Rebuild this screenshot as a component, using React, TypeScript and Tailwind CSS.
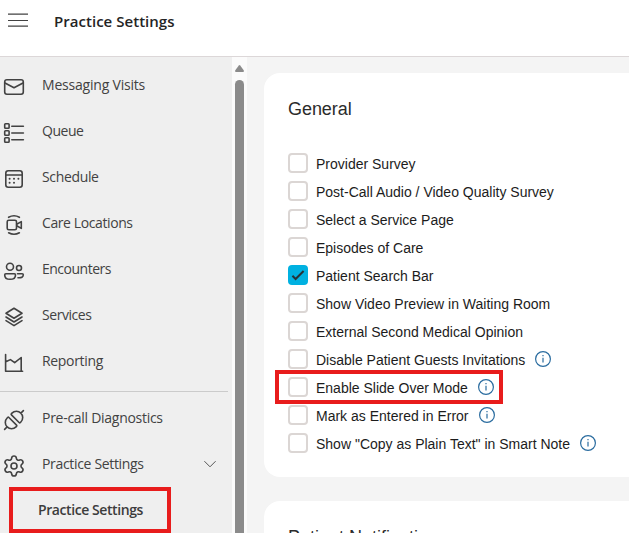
import type { ReactNode } from 'react';
import { Settings } from 'lucide-react';

type NavItem = { label: string; icon: ReactNode; tracking: string };
type Option = { label: string; checked?: boolean; info?: boolean; highlighted?: boolean };

function Icon({ children }: { children: ReactNode }) {
  return (
    <svg
      viewBox="0 0 24 24"
      className="w-6 h-6 shrink-0"
      fill="none"
      stroke="currentColor"
      strokeWidth="1.6"
      strokeLinecap="round"
      strokeLinejoin="round"
    >
      {children}
    </svg>
  );
}

const MAIN_NAV: NavItem[] = [
  {
    label: 'Messaging Visits',
    tracking: 'tracking-[-0.2px]',
    icon: (
      <Icon>
        <rect x="2.7" y="4.7" width="18.6" height="14.6" rx="2.2" />
        <path d="M3 8 12 12.8 21 8" />
      </Icon>
    ),
  },
  {
    label: 'Queue',
    tracking: 'tracking-[-0.45px]',
    icon: (
      <Icon>
        <rect x="2.7" y="2.8" width="4.4" height="4.4" rx="0.8" />
        <rect x="2.7" y="9.8" width="4.4" height="4.4" rx="0.8" />
        <rect x="2.7" y="16.8" width="4.4" height="4.4" rx="0.8" />
        <path d="M9.8 5.2h11.6M9.8 12h11.6M9.8 18.8h11.6" />
      </Icon>
    ),
  },
  {
    label: 'Schedule',
    tracking: 'tracking-[-0.35px]',
    icon: (
      <Icon>
        <rect x="3.8" y="3.8" width="16.4" height="16.4" rx="2.4" />
        <path d="M4 8h16" />
        <path d="M7.6 11.7h.01M12 11.7h.01M16.4 11.7h.01M7.6 15.8h.01M12 15.8h.01" strokeWidth="2" />
      </Icon>
    ),
  },
  {
    label: 'Care Locations',
    tracking: 'tracking-[-0.4px]',
    icon: (
      <Icon>
        <rect x="5.2" y="7.2" width="9.3" height="9.6" rx="1.6" />
        <path d="M14.7 11.2 19.3 8.6v6.8l-4.6-2.6M6.6 4.3q5.4-3 10.8 0M6.6 19.8q5.4 3 10.8 0" />
      </Icon>
    ),
  },
  {
    label: 'Encounters',
    tracking: 'tracking-[-0.5px]',
    icon: (
      <Icon>
        <circle cx="8" cy="7.8" r="3.5" />
        <circle cx="17" cy="9" r="2.5" />
        <path d="M3.8 14.8h8.6q1.1 0 1.1 1.1c0 3-2.4 4.4-5.4 4.4s-5.4-1.4-5.4-4.4q0-1.1 1.1-1.1ZM15.5 14.8h4.7q1.1 0 1.1 1c0 2.2-1.8 3.2-5.3 2.9" />
      </Icon>
    ),
  },
  {
    label: 'Services',
    tracking: 'tracking-[-0.45px]',
    icon: (
      <Icon>
        <path d="m12 3.3 8 5-8 5-8-5ZM4 12l8 5 8-5M4 15.6l8 5 8-5" />
      </Icon>
    ),
  },
  {
    label: 'Reporting',
    tracking: 'tracking-[-0.33px]',
    icon: (
      <Icon>
        <path d="M3.6 3.5v16.7h17M3.8 10.8l4.6-2.2 4.3 3.1 6.5-5.2v13.6" />
      </Icon>
    ),
  },
];

const OPTIONS: Option[] = [
  { label: 'Provider Survey' },
  { label: 'Post-Call Audio / Video Quality Survey' },
  { label: 'Select a Service Page' },
  { label: 'Episodes of Care' },
  { label: 'Patient Search Bar', checked: true },
  { label: 'Show Video Preview in Waiting Room' },
  { label: 'External Second Medical Opinion' },
  { label: 'Disable Patient Guests Invitations', info: true },
  { label: 'Enable Slide Over Mode', info: true, highlighted: true },
  { label: 'Mark as Entered in Error', info: true },
  { label: 'Show "Copy as Plain Text" in Smart Note', info: true },
];

function NavRow({ item, children }: { item: NavItem; children?: ReactNode }) {
  return (
    <a className="flex h-[46px] items-center pl-0.5 pr-4 text-[#424242]">
      <span className="pt-[3px]">{item.icon}</span>
      <span className={`ml-4 flex-1 whitespace-nowrap text-[14px] leading-5 ${item.tracking}`}>{item.label}</span>
      {children}
    </a>
  );
}

function InfoIcon() {
  return (
    <svg viewBox="0 0 16 16" className="ml-[10px] w-4 h-4 shrink-0" fill="none" stroke="#2a6c9f">
      <circle cx="8" cy="8" r="7.4" strokeWidth="1.2" />
      <path d="M8 6.8v4.8M8 4v1.3" strokeWidth="1.2" />
    </svg>
  );
}

function OptionRow({ option }: { option: Option }) {
  return (
    <label className="relative flex h-7 items-center">
      {option.checked ? (
        <span className="flex w-5 h-5 shrink-0 items-center justify-center rounded bg-[#00b1e1]">
          <svg viewBox="0 0 20 20" className="w-5 h-5" fill="none" stroke="#263238" strokeWidth="2">
            <path d="m4.4 10.8 3.2 3.2 8-8" />
          </svg>
        </span>
      ) : (
        <span className="w-5 h-5 shrink-0 rounded border-2 border-[#dbd6d4] bg-white" />
      )}
      <span className="ml-2 pt-0.5 whitespace-nowrap text-[14px] leading-5 text-[#1c1c1c]">{option.label}</span>
      {option.info && <InfoIcon />}
      {option.highlighted && (
        <span className="absolute -left-[13px] -top-[3px] w-[228px] h-[34px] border-4 border-[#e81c1c]" />
      )}
    </label>
  );
}

export default function App() {
  return (
    <div className="flex h-[533px] w-[629px] flex-col overflow-hidden bg-white font-['Liberation_Sans',Arial,sans-serif]">
      <header className="flex h-[57px] shrink-0 items-start border-b border-[#dcd7d8] pl-2 font-['Open_Sans','Noto_Sans',sans-serif]">
        <svg viewBox="0 0 20 14" className="mt-[13px] w-5 h-3.5" stroke="#424242" strokeWidth="1.2">
          <path d="M0 1.2h20M0 7.5h20M0 13.2h20" />
        </svg>
        <h1 className="ml-[26px] mt-[11px] text-[15px] font-semibold leading-5 tracking-[0.03px] text-[#242424]">
          Practice Settings
        </h1>
      </header>

      <div className="flex min-h-0 flex-1">
        <nav className="w-[232px] shrink-0 bg-[#efefef] pt-[5px] font-['Open_Sans','Noto_Sans',sans-serif]">
          {MAIN_NAV.map((item) => (
            <NavRow key={item.label} item={item} />
          ))}
          <div className="mt-[7px] mr-1 mb-[3px] h-px bg-[#cbcbcb]" />
          <NavRow
            item={{
              label: 'Pre-call Diagnostics',
              tracking: 'tracking-[-0.28px]',
              icon: (
                <Icon>
                  <g transform="rotate(45 12 12)">
                    <path d="M6.6 10.2h10.8q.9 0 .9-.9V8.6a6.3 6.3 0 0 0-12.6 0v.7q0 .9.9.9ZM12 2.3v-3.6" />
                    <path d="M6.6 13.8h10.8q.9 0 .9.9v.7a6.3 6.3 0 0 1-12.6 0v-.7q0-.9.9-.9ZM12 21.7v3.6" />
                  </g>
                </Icon>
              ),
            }}
          />
          <NavRow
            item={{
              label: 'Practice Settings',
              tracking: 'tracking-[-0.33px]',
              icon: <Settings className="w-6 h-6 shrink-0" strokeWidth={1.6} />,
            }}
          >
            <svg viewBox="0 0 12 8" className="w-3 h-2" fill="none" stroke="#555">
              <path d="m.4 1.2 5.6 5.6 5.6-5.6" />
            </svg>
          </NavRow>
          <div className="ml-[9px] flex h-[46px] w-[162px] items-center border-4 border-[#e81c1c] pl-[25px]">
            <span className="whitespace-nowrap text-[14px] font-semibold leading-5 tracking-[-0.42px] text-[#3c3c3c]">
              Practice Settings
            </span>
          </div>
        </nav>

        <div className="flex w-[15px] shrink-0 flex-col items-center bg-[#fbfbfb] pt-2">
          <svg viewBox="0 0 9 7" className="w-[9px] h-[7px]" fill="#8b8b8b">
            <path d="M3.8.5q.7-.8 1.4 0L8.7 5.3Q9.4 7 8 7H1Q-.4 7 .3 5.3Z" />
          </svg>
          <div className="mt-2 w-[9px] flex-1 rounded-t-full bg-[#8b8b8b]" />
        </div>

        <main className="min-w-0 flex-1 overflow-hidden bg-[#f4f4f4] pl-[17px] pt-4">
          <section className="h-[404px] rounded-l-2xl bg-white pl-6 pt-6">
            <h2 className="mb-7 text-[18px] leading-6 tracking-[-0.05px] text-[#2b2b2b]">General</h2>
            {OPTIONS.map((option) => (
              <OptionRow key={option.label} option={option} />
            ))}
          </section>
          <section className="mt-6 h-[200px] rounded-l-2xl bg-white pl-6 pt-6">
            <h2 className="text-[18px] leading-6 text-[#2b2b2b]">Patient Notifications</h2>
          </section>
        </main>
      </div>
    </div>
  );
}
